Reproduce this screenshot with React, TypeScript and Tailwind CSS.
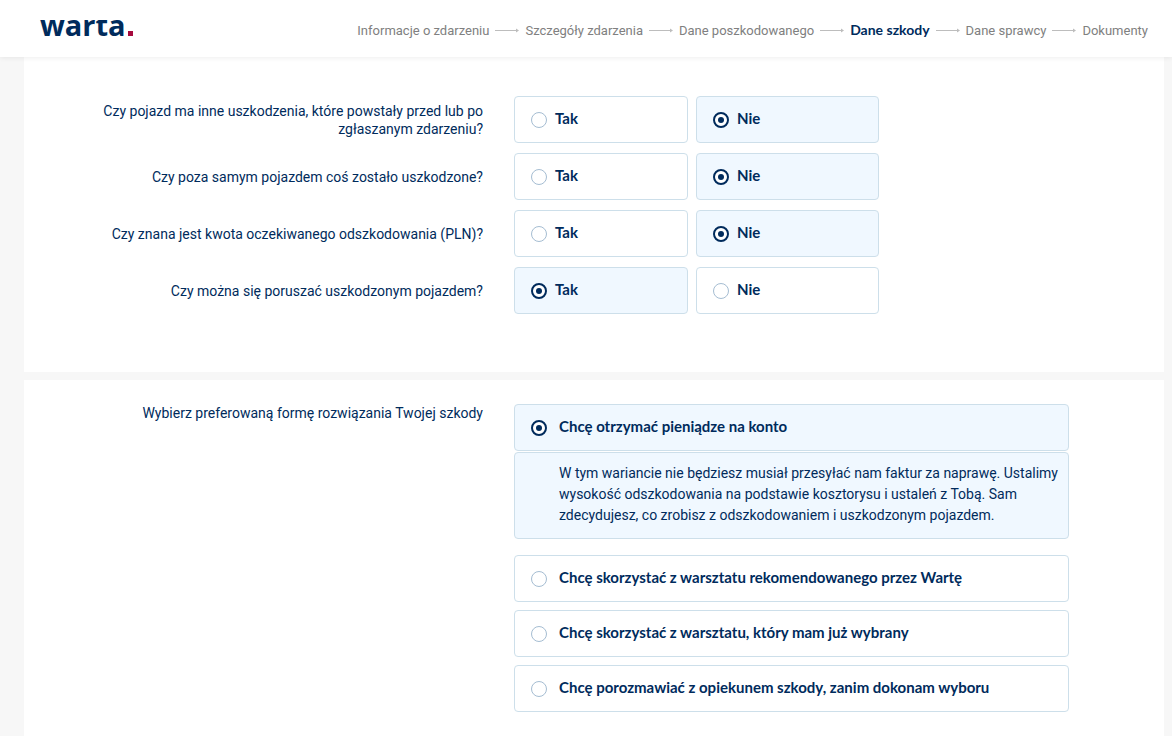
import { Fragment, useState } from "react";
import clsx from "clsx";

const steps = [
  "Informacje o zdarzeniu",
  "Szczegóły zdarzenia",
  "Dane poszkodowanego",
  "Dane szkody",
  "Dane sprawcy",
  "Dokumenty",
];

const questions = [
  {
    id: "inne-uszkodzenia",
    label: "Czy pojazd ma inne uszkodzenia, które powstały przed lub po zgłaszanym zdarzeniu?",
    answer: "Nie",
  },
  { id: "poza-pojazdem", label: "Czy poza samym pojazdem coś zostało uszkodzone?", answer: "Nie" },
  { id: "kwota", label: "Czy znana jest kwota oczekiwanego odszkodowania (PLN)?", answer: "Nie" },
  { id: "poruszanie", label: "Czy można się poruszać uszkodzonym pojazdem?", answer: "Tak" },
];

const solutions = [
  {
    id: "konto",
    label: "Chcę otrzymać pieniądze na konto",
    description:
      "W tym wariancie nie będziesz musiał przesyłać nam faktur za naprawę. Ustalimy wysokość odszkodowania na podstawie kosztorysu i ustaleń z Tobą. Sam zdecydujesz, co zrobisz z odszkodowaniem i uszkodzonym pojazdem.",
  },
  { id: "rekomendowany", label: "Chcę skorzystać z warsztatu rekomendowanego przez Wartę" },
  { id: "wybrany", label: "Chcę skorzystać z warsztatu, który mam już wybrany" },
  { id: "opiekun", label: "Chcę porozmawiać z opiekunem szkody, zanim dokonam wyboru" },
];

const Logo = () => (
  <a href="#" className="relative flex items-baseline">
    <span className="font-['Open_Sans',sans-serif] text-[29px] font-bold leading-[33px]">warta</span>
    {/* levels the top of the "t" with the other letters */}
    <span className="absolute inset-x-0 top-0 z-10 h-3 bg-white" />
    <span className="ml-[2px] size-[5px] bg-[#a6093d]" />
  </a>
);

const Arrow = () => (
  <svg width="24" height="6" viewBox="0 0 24 6" className="shrink-0 text-[#bdbdbd]" aria-hidden="true">
    <path d="M0 3.5H22" stroke="currentColor" />
    <path d="M21 1.5L24 3.5L21 5.5Z" fill="currentColor" />
  </svg>
);

type RadioCardProps = {
  name: string;
  label: string;
  checked: boolean;
  wide?: boolean;
  onChange: () => void;
};

const RadioCard = ({ name, label, checked, wide, onChange }: RadioCardProps) => (
  <label
    className={clsx(
      "flex cursor-pointer items-center rounded border border-[#cddfea] px-4 pb-[11px] pt-3 font-['Lato',sans-serif] text-[15px] font-bold leading-[18px]",
      wide ? "gap-3" : "gap-2",
      checked ? "bg-[#f0f8ff]" : "bg-white",
    )}
  >
    <input
      type="radio"
      name={name}
      checked={checked}
      onChange={onChange}
      className="flex size-4 shrink-0 appearance-none items-center justify-center rounded-full border border-[#a5bdd2] bg-white checked:border-2 checked:border-[#002b5c] checked:before:size-[6px] checked:before:rounded-full checked:before:bg-[#002b5c]"
    />
    <span className="pb-1">{label}</span>
  </label>
);

const App = () => {
  const [answers, setAnswers] = useState<Record<string, string>>(
    Object.fromEntries(questions.map((q) => [q.id, q.answer])),
  );
  const [solution, setSolution] = useState("konto");

  return (
    <div className="min-h-screen bg-[#f7f7f7] font-['Roboto',sans-serif] text-sm text-[#002b5c]">
      <header className="sticky top-0 z-10 flex items-center justify-between bg-white pb-4 pl-10 pr-6 pt-2 shadow-[0_1px_5px_rgba(0,0,0,0.07)]">
        <Logo />
        <nav className="flex items-center gap-[6px] pt-[11px] text-[13px] leading-[17px]">
          {steps.map((step, i) => (
            <Fragment key={step}>
              {i > 0 && <Arrow />}
              <a
                href="#"
                className={
                  step === "Dane szkody"
                    ? "whitespace-nowrap pb-0.5 font-['Lato',sans-serif] text-sm font-bold leading-[17px]"
                    : "whitespace-nowrap text-[#808080]"
                }
              >
                {step}
              </a>
            </Fragment>
          ))}
        </nav>
      </header>

      <main className="flex min-h-[calc(100vh-57px)] flex-col gap-2 pl-6 pr-2">
        <section className="flex flex-col gap-[10px] bg-white pb-[58px] pt-[39px]">
          {questions.map((q) => (
            <div key={q.id} role="radiogroup" aria-labelledby={q.id} className="grid grid-cols-12 items-center">
              <p id={q.id} className="col-span-5 pl-16 pr-4 text-right leading-[18px]">
                {q.label}
              </p>
              <div className="col-span-4 grid grid-cols-2">
                {["Tak", "Nie"].map((option, i) => (
                  <div key={option} className={i === 0 ? "pl-[15px] pr-px" : "pl-[7px]"}>
                    <RadioCard
                      name={`q-${q.id}`}
                      label={option}
                      checked={answers[q.id] === option}
                      onChange={() => setAnswers({ ...answers, [q.id]: option })}
                    />
                  </div>
                ))}
              </div>
            </div>
          ))}
        </section>

        <section className="grow bg-white py-6">
          <div role="radiogroup" aria-labelledby="forma" className="grid grid-cols-12 items-start">
            <p id="forma" className="col-span-5 pl-16 pr-4 text-right leading-[18px]">
              Wybierz preferowaną formę rozwiązania Twojej szkody
            </p>
            <div className="col-span-6 flex flex-col gap-2 pl-[15px]">
              {solutions.map((s) => (
                <div key={s.id}>
                  <RadioCard
                    wide
                    name="forma"
                    label={s.label}
                    checked={solution === s.id}
                    onChange={() => setSolution(s.id)}
                  />
                  {s.description && solution === s.id && (
                    <p className="mb-2 mt-px rounded border border-[#cddfea] bg-[#f0f8ff] pb-3 pl-11 pr-2 pt-[10px] leading-[21px]">
                      {s.description}
                    </p>
                  )}
                </div>
              ))}
            </div>
          </div>
        </section>
      </main>
    </div>
  );
};

export default App;
